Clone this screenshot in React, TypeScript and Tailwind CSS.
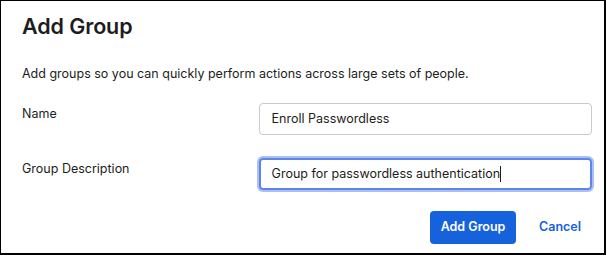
import React from "react";

export default function App() {
  return (
    <div
      className="w-[606px] h-[255px] bg-white border-l border-t border-r-2 border-b-2 border-black overflow-hidden text-[#1d1d21]"
      style={{ fontFamily: "Inter, 'Noto Sans', sans-serif" }}
    >
      <div className="pl-[21px] pr-[12px] pt-[10px]">
        <h1 className="text-[21.5px] leading-[30px] font-semibold tracking-[-0.1px]">Add Group</h1>
        <p className="mt-[25px] text-[12.5px] leading-[16px] text-[#1d1d21]">
          Add groups so you can quickly perform actions across large sets of people.
        </p>
        <div className="mt-[21px] flex items-start">
          <label className="w-[237px] pt-[3px] text-[12.5px] leading-[16px]">Name</label>
          <div className="w-[334px] h-[32px] rounded-[4px] border border-[#c9c9cf] flex items-center px-[12px] text-[12.5px]">
            Enroll Passwordless
          </div>
        </div>
        <div className="mt-[23px] flex items-start">
          <label className="w-[237px] pt-[3px] text-[12.5px] leading-[16px]">Group Description</label>
          <div className="w-[334px] h-[32px] rounded-[4px] border-2 border-[#5e86e8] ring-2 ring-[#a9bff5] flex items-center px-[11px] text-[12.5px]">
            <span>Group for passwordless authentication</span>
            <span className="inline-block w-[1px] h-[16px] bg-[#1d1d21]" />
          </div>
        </div>
        <div className="mt-[21px] flex items-center justify-end pr-[11px]">
          <button className="h-[33px] w-[86px] rounded-[4px] bg-[#1662dd] text-white text-[12.5px] font-semibold">
            Add Group
          </button>
          <button className="ml-[23px] text-[12.5px] font-semibold text-[#1662dd]">Cancel</button>
        </div>
      </div>
    </div>
  );
}
